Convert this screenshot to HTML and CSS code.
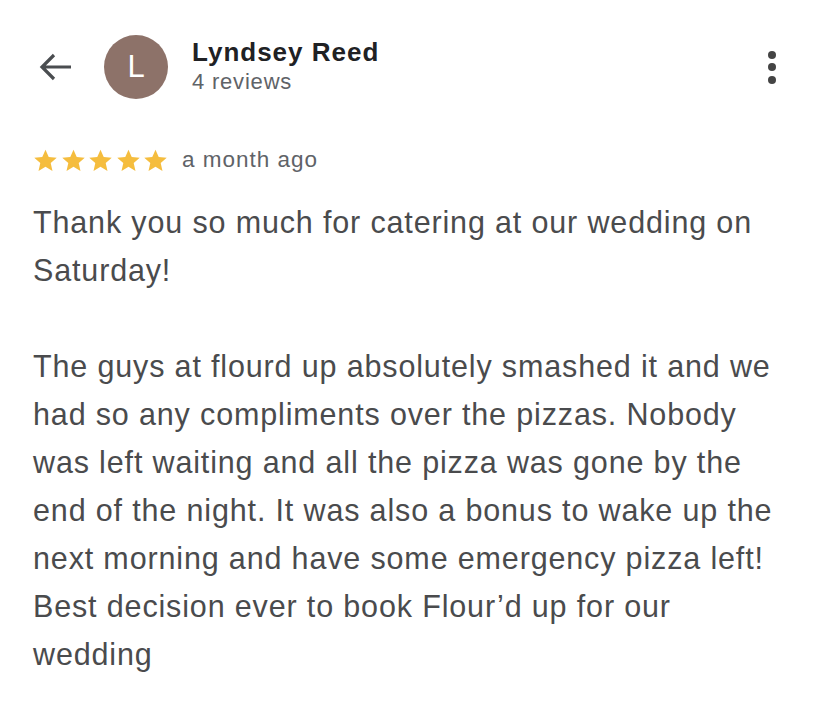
FILE: index.html
```html
<!DOCTYPE html>
<html>
<head>
<meta charset="utf-8">
<link rel="stylesheet" href="styles.css">
</head>
<body>
<div class="page">
  <header class="header">
    <div class="back">
      <svg width="34" height="30" viewBox="0 0 34 30"><path d="M32 15H3M15 3L3 15l12 12" fill="none" stroke="#4a4d50" stroke-width="3.2" stroke-linecap="butt" stroke-linejoin="miter"/></svg>
    </div>
    <div class="avatar">L</div>
    <div class="who">
      <div class="name">Lyndsey Reed</div>
      <div class="count">4 reviews</div>
    </div>
    <div class="more">
      <span class="dot"></span><span class="dot"></span><span class="dot"></span>
    </div>
  </header>
  <div class="meta">
    <div class="stars">
      <svg viewBox="0 0 24 24" class="star"><path d="M12 1.6l3.1 7.1 7.7.7-5.8 5.1 1.7 7.6L12 18.1l-6.7 4 1.7-7.6-5.8-5.1 7.7-.7z"/></svg>
      <svg viewBox="0 0 24 24" class="star"><path d="M12 1.6l3.1 7.1 7.7.7-5.8 5.1 1.7 7.6L12 18.1l-6.7 4 1.7-7.6-5.8-5.1 7.7-.7z"/></svg>
      <svg viewBox="0 0 24 24" class="star"><path d="M12 1.6l3.1 7.1 7.7.7-5.8 5.1 1.7 7.6L12 18.1l-6.7 4 1.7-7.6-5.8-5.1 7.7-.7z"/></svg>
      <svg viewBox="0 0 24 24" class="star"><path d="M12 1.6l3.1 7.1 7.7.7-5.8 5.1 1.7 7.6L12 18.1l-6.7 4 1.7-7.6-5.8-5.1 7.7-.7z"/></svg>
      <svg viewBox="0 0 24 24" class="star"><path d="M12 1.6l3.1 7.1 7.7.7-5.8 5.1 1.7 7.6L12 18.1l-6.7 4 1.7-7.6-5.8-5.1 7.7-.7z"/></svg>
    </div>
    <span class="when">a month ago</span>
  </div>
  <p class="review">Thank you so much for catering at our wedding on Saturday!</p>
  <p class="review">The guys at flourd up absolutely smashed it and we had so any compliments over the pizzas. Nobody was left waiting and all the pizza was gone by the end of the night. It was also a bonus to wake up the next morning and have some emergency pizza left! Best decision ever to book Flour’d up for our wedding</p>
</div>
</body>
</html>
```
FILE: styles.css
```css
* { box-sizing: border-box; }
html, body { margin: 0; padding: 0; background: #fff; }
body { font-family: "Liberation Sans", Arial, sans-serif; }
.page { width: 828px; height: 706px; padding: 0 45px 0 33px; overflow: hidden; }
.header { display: flex; align-items: center; height: 132px; padding-top: 2px; }
.back { width: 34px; height: 30px; margin-left: 6px; display: flex; }
.avatar { width: 64px; height: 64px; border-radius: 50%; background: #8d7269; color: #fff; font-size: 31px; display: flex; align-items: center; justify-content: center; margin-left: 31px; }
.who { margin-left: 24px; display: flex; flex-direction: column; margin-top: -2px; }
.name { font-size: 26px; font-weight: bold; color: #202124; line-height: 32px; letter-spacing: 1px; }
.count { font-size: 22px; color: #5f6368; line-height: 28px; letter-spacing: 0.8px; }
.more { margin-left: auto; margin-right: 7px; display: flex; flex-direction: column; gap: 4.5px; }
.dot { width: 8px; height: 8px; border-radius: 50%; background: #444; display: block; }
.meta { display: flex; align-items: center; height: 56px; margin-top: 0; }
.stars { display: flex; gap: 2.5px; }
.star { width: 25px; height: 25px; fill: #f5bd3e; }
.when { margin-left: 14px; font-size: 22.5px; color: #5f6368; letter-spacing: 1px; }
.review { margin: 10px 0 48px; font-size: 30.5px; line-height: 48px; color: #4a4b4d; letter-spacing: 0.85px; }
```
